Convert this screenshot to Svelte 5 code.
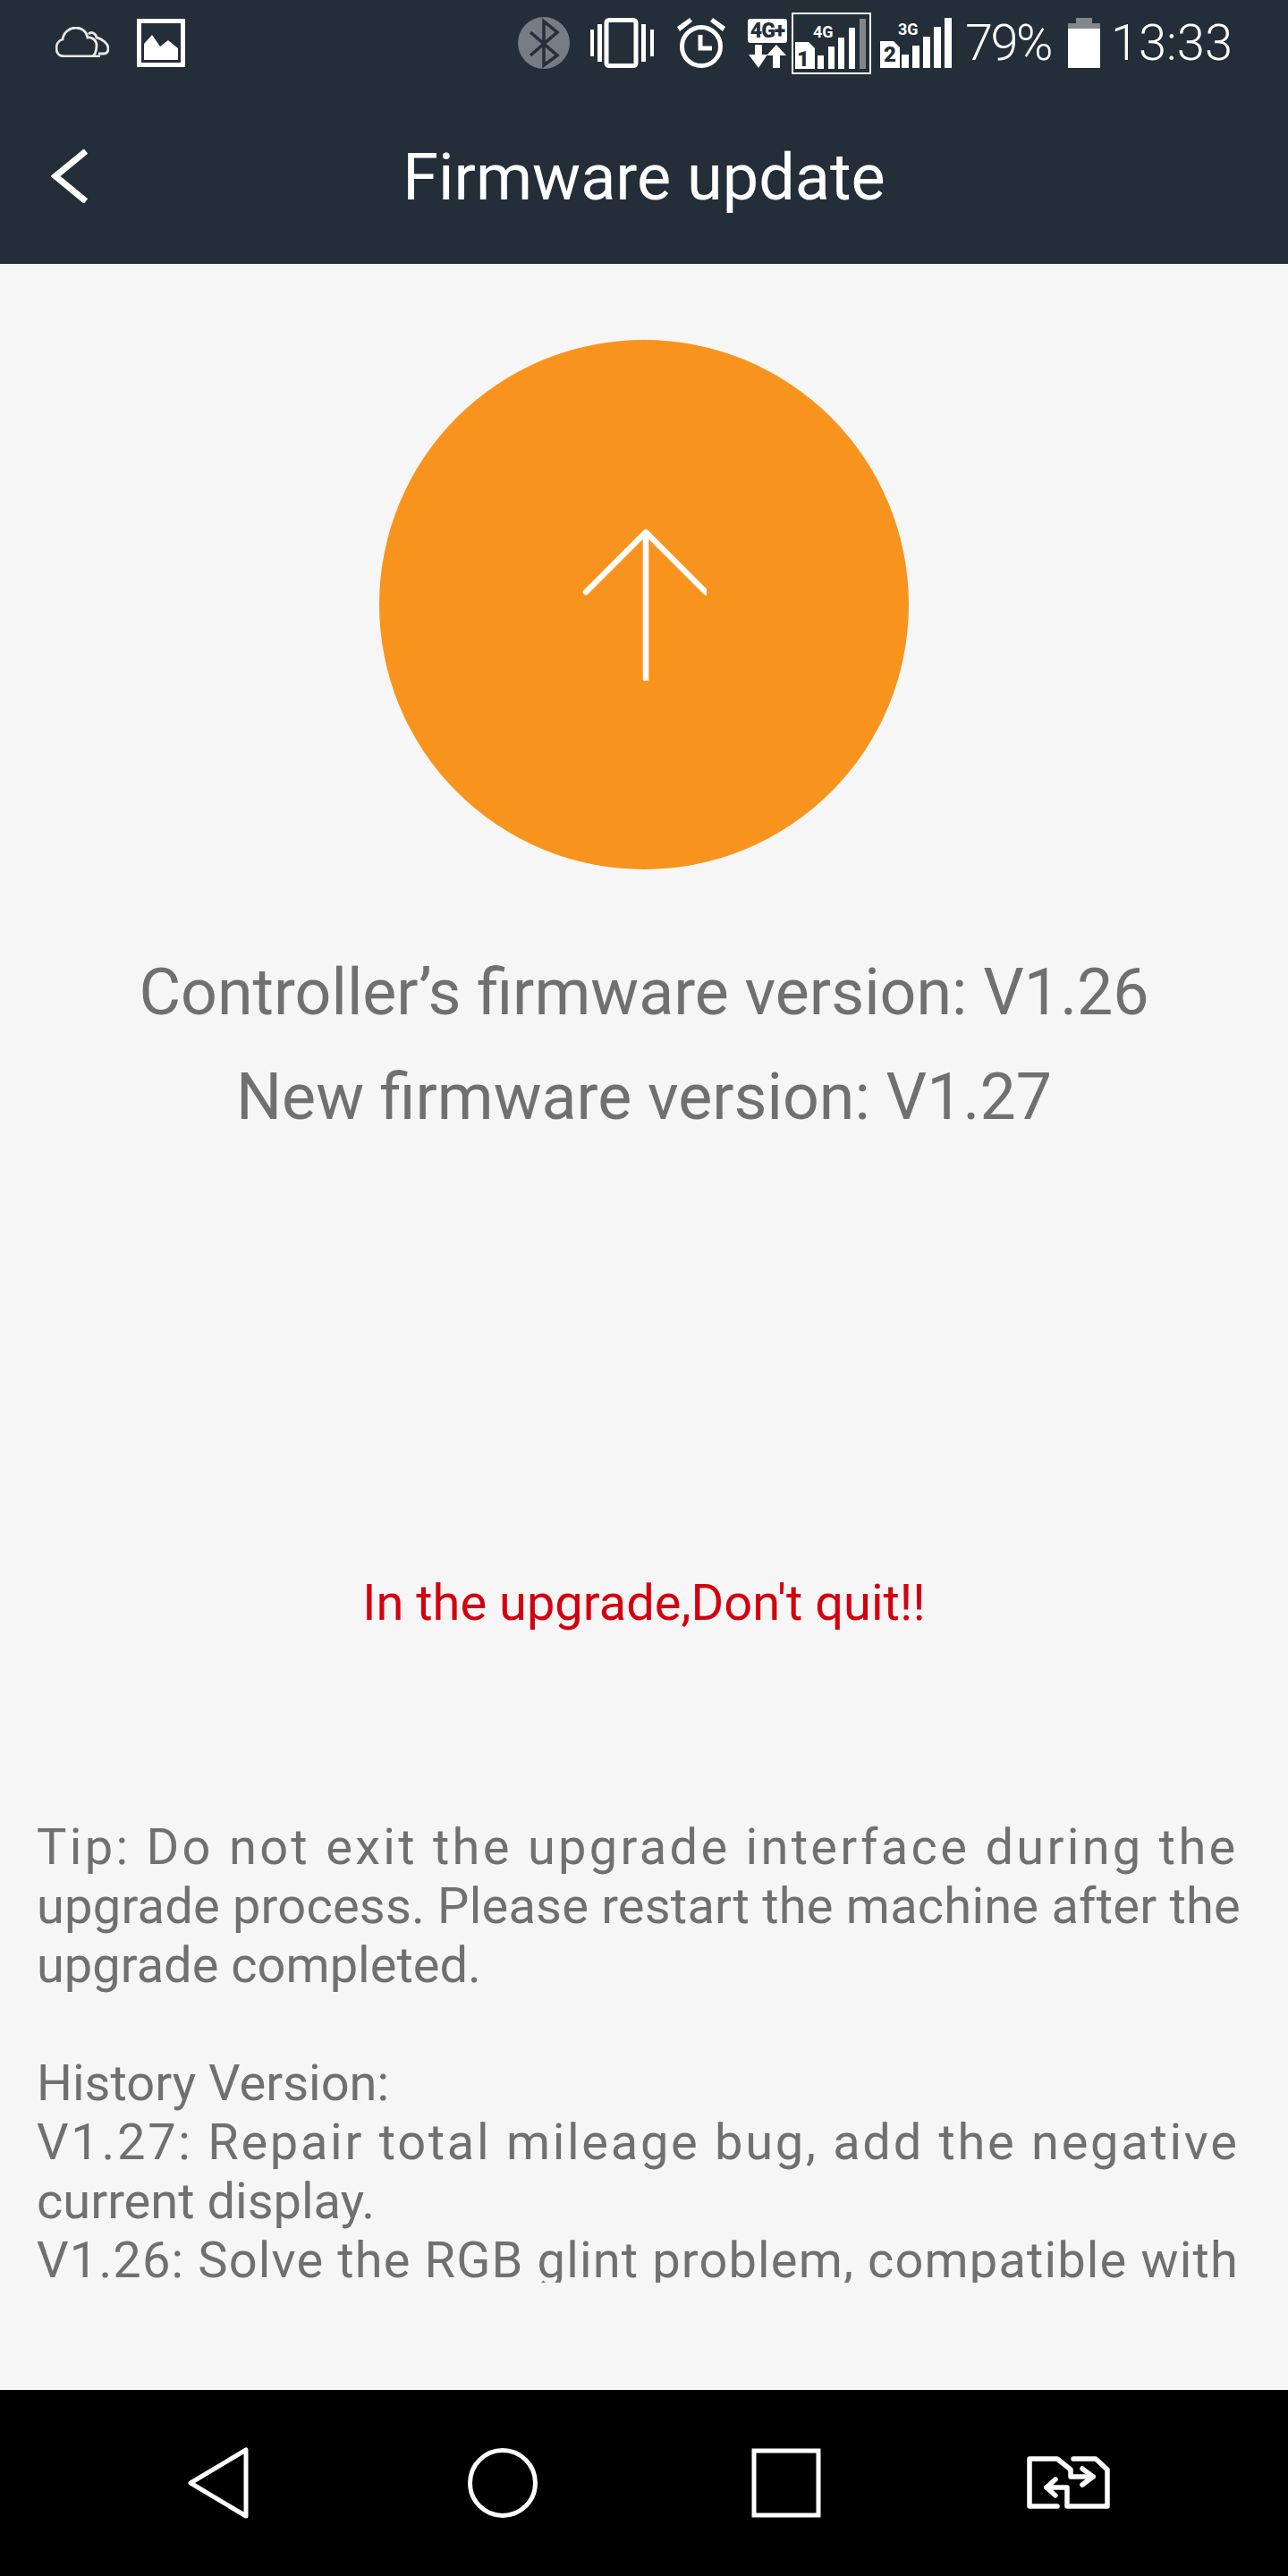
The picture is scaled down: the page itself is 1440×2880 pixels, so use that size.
<script>
  const tipLines = [
    { text: 'Tip: Do not exit the upgrade interface during the', spacing: 3.3 },
    { text: 'upgrade process. Please restart the machine after the', spacing: 0.21 },
    { text: 'upgrade completed.', spacing: 0 },
    { text: '\u00a0', spacing: 0 },
    { text: 'History Version:', spacing: 0 },
    { text: 'V1.27: Repair total mileage bug, add the negative', spacing: 2.7 },
    { text: 'current display.', spacing: 0 },
    { text: 'V1.26: Solve the RGB glint problem, compatible with', spacing: 1.14 }
  ];
  const sim1Bars = [
    { x: 29, top: 48, color: '#fff' },
    { x: 41, top: 38, color: '#fff' },
    { x: 52, top: 28, color: '#fff' },
    { x: 64, top: 17, color: '#fff' },
    { x: 76, top: 7, color: '#82878e' }
  ];
  const sim2Bars = [
    { x: 24, top: 41 },
    { x: 36, top: 31 },
    { x: 48, top: 21 },
    { x: 60, top: 10 },
    { x: 72, top: 0 }
  ];
</script>

<div class="page">
  <header class="top">
    <div class="status">
      <svg class="s-cloud" viewBox="0 0 60 34" width="60" height="34">
        <path d="M50 33H10C4 33 1 29 1 24c0-5 3-9 7-10C9 6 16 1 23 1c7 0 12 5 13 11 5-1 10 3 10 9 0 6-2 12-6 12" fill="none" stroke="#e8e9ea" stroke-width="2.800"/>
        <path d="M37 8c3-3 8-1 9 4 6 1 13 7 13 12 0 4-2 6-5 6h-6" fill="none" stroke="#e8e9ea" stroke-width="2.800"/>
      </svg>
      <svg class="s-image" viewBox="0 0 54 54" width="54" height="54">
        <rect x="2.500" y="2.500" width="49" height="49" fill="none" stroke="#fff" stroke-width="5"/>
        <path d="M8 46V28l9-10 9 13 9-7 11 9v13z" fill="#fff"/>
      </svg>
      <span class="s-spacer"></span>
      <svg class="s-bt" viewBox="0 0 58 58" width="58" height="58">
        <circle cx="29" cy="29" r="29" fill="#767c84"/>
        <path d="M14 17l30 26-15 11V5l15 12-30 26" fill="none" stroke="#252e39" stroke-width="3.500"/>
      </svg>
      <svg class="s-vib" viewBox="0 0 73 56" width="73" height="56">
        <rect x="19" y="2.500" width="33" height="51" rx="3" fill="none" stroke="#fff" stroke-width="5"/>
        <path d="M1 13h4v30H1zM9 7h5v42H9zM58 7h5v42h-5zM68 13h4v30h-4z" fill="#fff"/>
      </svg>
      <svg class="s-alarm" viewBox="0 0 56 58" width="56" height="58">
        <circle cx="28" cy="33" r="21.500" fill="none" stroke="#fff" stroke-width="5"/>
        <path d="M27 20v15h13" fill="none" stroke="#fff" stroke-width="5"/>
        <path d="M1 11L15 1l3 4-14 11zM55 11L41 1l-3 4 14 11z" fill="#fff"/>
      </svg>
      <div class="s-data">
        <span class="s-data-label">4G+</span>
        <svg viewBox="0 0 44 26" width="44" height="26">
          <path d="M8 0h8v11h6L12 26 1 11h7zM28 26h8V12h7L32 0 21 12h7z" fill="#fff"/>
        </svg>
      </div>
      <div class="s-box">
        <span class="s-net">4G</span>
        <svg viewBox="0 0 85 65" width="85" height="65">
          <path d="M2 31h15l7 7v23H2z" fill="#fff"/>
          {#each sim1Bars as bar}
            <rect x={bar.x - 2} y={bar.top - 2} width="7" height={63 - bar.top} fill={bar.color}/>
          {/each}
        </svg>
        <span class="s-simno">1</span>
      </div>
      <div class="s-sim">
        <span class="s-net">3G</span>
        <svg viewBox="0 0 80 56" width="80" height="56">
          <path d="M0 26h15l7 7v23H0z" fill="#fff"/>
          {#each sim2Bars as bar}
            <rect x={bar.x} y={bar.top} width="8" height={56 - bar.top} fill="#fff"/>
          {/each}
        </svg>
        <span class="s-simno">2</span>
      </div>
      <span class="s-text s-pct">79%</span>
      <svg class="s-batt" viewBox="0 0 36 56" width="36" height="56">
        <path d="M9 0h18v6h9v6H0V6h9z" fill="#82878e"/>
        <rect x="0" y="12" width="36" height="44" fill="#fff"/>
      </svg>
      <span class="s-text s-time">13:33</span>
    </div>
    <div class="titlebar">
      <svg class="back" viewBox="0 0 42 60" width="42" height="60">
        <path d="M39 2L5 30l34 28" fill="none" stroke="#fff" stroke-width="7"/>
      </svg>
      <h1>Firmware update</h1>
    </div>
  </header>

  <main>
    <div class="circle">
      <svg viewBox="0 0 140 170" width="140" height="170">
        <path d="M72 5v163M5 71L72 4l67 67" fill="none" stroke="#fff" stroke-width="6.500" stroke-linecap="round" stroke-linejoin="round"/>
      </svg>
    </div>
    <div class="versions">
      <p>Controller’s firmware version: V1.26</p>
      <p>New firmware version: V1.27</p>
    </div>
    <p class="warning">In the upgrade,Don't quit!!</p>
    <div class="tips">
      {#each tipLines as line}
        <div class="tip-line" style="letter-spacing: {line.spacing}px">{line.text}</div>
      {/each}
    </div>
  </main>

  <nav>
    <svg class="n-back" viewBox="0 0 68 80" width="68" height="80">
      <path d="M65 3v74L3 40z" fill="none" stroke="#fff" stroke-width="5" stroke-linejoin="round"/>
    </svg>
    <svg class="n-home" viewBox="0 0 78 78" width="78" height="78">
      <circle cx="39" cy="39" r="36.500" fill="none" stroke="#fff" stroke-width="5"/>
    </svg>
    <svg class="n-recent" viewBox="0 0 78 78" width="78" height="78">
      <rect x="3" y="3" width="72" height="72" fill="none" stroke="#fff" stroke-width="5"/>
    </svg>
    <svg class="n-sim" viewBox="0 0 94 60" width="94" height="60">
      <path d="M34 56H3V3h31l15 12v8h25M52 3h25l13 12v41H45V35H22" fill="none" stroke="#fff" stroke-width="5.500" stroke-linecap="round" stroke-linejoin="round"/>
      <path d="M62 14l12 9-12 9M32 26l-10 9 10 9" fill="none" stroke="#fff" stroke-width="5.500" stroke-linecap="round" stroke-linejoin="round"/>
    </svg>
  </nav>
</div>

<style>
  :global(body) {
    margin: 0;
    background: #f6f6f6;
  }
  .page {
    width: 1440px;
    height: 2880px;
    display: flex;
    flex-direction: column;
    font-family: Roboto, "Liberation Sans", sans-serif;
  }
  .top {
    height: 295px;
    background: #242e38;
    color: #fff;
    flex-shrink: 0;
  }
  .status {
    height: 96px;
    display: flex;
    align-items: center;
    padding: 0 62px;
    box-sizing: border-box;
  }
  .s-cloud { margin-top: -2px; }
  .s-image { margin-left: 31px; }
  .s-spacer { flex: 1; }
  .s-bt { margin-right: 22px; }
  .s-vib { margin-right: 24px; }
  .s-alarm { margin-right: 24px; }
  .s-data {
    width: 44px;
    display: flex;
    flex-direction: column;
    align-items: center;
    gap: 2px;
    margin-right: 5px;
  }
  .s-data svg { display: block; }
  .s-data-label {
    width: 44px;
    height: 27px;
    background: #fff;
    color: #242e38;
    border-radius: 3px;
    font-size: 23px;
    line-height: 27px;
    font-weight: 900;
    text-align: center;
    letter-spacing: -1px;
    overflow: hidden;
  }
  .s-box {
    position: relative;
    width: 89px;
    height: 69px;
    border: 2px solid #fff;
    box-sizing: border-box;
    margin-right: 10px;
  }
  .s-box svg, .s-sim svg { display: block; }
  .s-sim {
    position: relative;
    width: 80px;
    height: 56px;
    margin-right: 15px;
  }
  .s-net {
    position: absolute;
    top: 3px;
    left: 20px;
    font-size: 18px;
    font-weight: 700;
    line-height: 20px;
  }
  .s-box .s-net { top: 10px; left: 22px; }
  .s-simno {
    position: absolute;
    bottom: 3px;
    left: 4px;
    color: #242e38;
    font-size: 24px;
    font-weight: 900;
    line-height: 24px;
  }
  .s-text {
    font-size: 56px;
    font-weight: 300;
    line-height: 64px;
  }
  .s-pct {
    margin-right: 19px;
    letter-spacing: -2.5px;
  }
  .s-batt { margin-right: 12px; }
  .titlebar {
    height: 199px;
    position: relative;
    display: flex;
    align-items: flex-start;
    justify-content: center;
  }
  .back {
    position: absolute;
    left: 57px;
    top: 71px;
  }
  h1 {
    margin: 0;
    padding-top: 64px;
    font-size: 72px;
    line-height: 78px;
    font-weight: 400;
    color: #fff;
  }
  main {
    flex: 1;
    background: #f6f6f6;
    display: flex;
    flex-direction: column;
    align-items: center;
  }
  .circle {
    width: 592px;
    height: 592px;
    margin-top: 85px;
    border-radius: 50%;
    background: #f8941e;
    display: flex;
    align-items: center;
    justify-content: center;
  }
  .versions {
    margin-top: 79px;
    text-align: center;
    color: #707070;
    font-size: 71.700px;
    font-weight: 400;
    line-height: 117px;
  }
  .versions p { margin: 0; }
  .warning {
    margin: 474px 0 0;
    color: #d3000f;
    font-size: 56px;
    line-height: 66px;
  }
  .tips {
    align-self: stretch;
    margin: 207px 0 0;
    padding-left: 41px;
    height: 520px;
    overflow: hidden;
    color: #707070;
    font-size: 56px;
    font-weight: 400;
    line-height: 66px;
    white-space: nowrap;
  }
  nav {
    height: 208px;
    flex-shrink: 0;
    background: #000;
    display: flex;
    align-items: center;
    padding-left: 210px;
  }
  .n-home { margin-left: 245px; }
  .n-recent { margin-left: 239px; }
  .n-sim { margin-left: 230px; }
</style>
